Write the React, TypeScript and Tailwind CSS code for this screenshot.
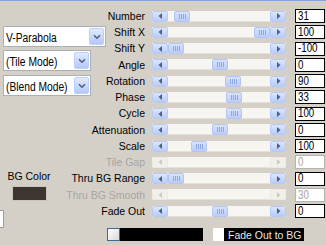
const rows = [
  { label: "Number", value: "31", pos: 6 },
  { label: "Shift X", value: "100", pos: 86 },
  { label: "Shift Y", value: "-100", pos: 0 },
  { label: "Angle", value: "0", pos: 44 },
  { label: "Rotation", value: "90", pos: 57 },
  { label: "Phase", value: "33", pos: 58 },
  { label: "Cycle", value: "100", pos: 58 },
  { label: "Attenuation", value: "0", pos: 44 },
  { label: "Scale", value: "100", pos: 23 },
  { label: "Tile Gap", value: "0", pos: -1, off: true },
  { label: "Thru BG Range", value: "0", pos: 0 },
  { label: "Thru BG Smooth", value: "30", pos: -1, off: true },
  { label: "Fade Out", value: "0", pos: 44 },
];

const ui = { fontFamily: '"Liberation Sans", Arial, sans-serif' };

function Arrow({ dir, off }: { dir: "l" | "r"; off?: boolean }) {
  return (
    <div
      className={`flex h-full w-[16px] shrink-0 items-center justify-center rounded-[2px] border ${
        off ? "border-[#ebe9e1] bg-[#f1f0ea]" : "border-[#b7caf5] bg-gradient-to-b from-[#dce6fd] to-[#b8ccf8]"
      }`}
    >
      <svg width="5" height="6" viewBox="0 0 5 6">
        {dir === "l" ? (
          <path d="M0.5 3 L4 0 L4 6 Z" fill={off ? "#cdcbc0" : "#4b5f8c"} />
        ) : (
          <path d="M4.5 3 L1 0 L1 6 Z" fill={off ? "#cdcbc0" : "#4b5f8c"} />
        )}
      </svg>
    </div>
  );
}

function Thumb({ pos }: { pos: number }) {
  return (
    <div
      className="flex h-full w-[16px] items-center justify-center gap-[1px] rounded-[2px] border border-[#b3c6f2] bg-gradient-to-b from-[#d6e2fd] to-[#bacdf9]"
      style={{ marginLeft: pos }}
    >
      <span className="h-[5px] w-[1px] bg-[#8ea8e6]" />
      <span className="h-[5px] w-[1px] bg-[#8ea8e6]" />
      <span className="h-[5px] w-[1px] bg-[#8ea8e6]" />
      <span className="h-[5px] w-[1px] bg-[#8ea8e6]" />
    </div>
  );
}

function Bar({ pos, off }: { pos: number; off?: boolean }) {
  return (
    <div className="ml-[7px] flex h-[11px] w-[134px] bg-[#f6f5f1] shadow-[inset_0_-1px_0_#e4e1d8]">
      <Arrow dir="l" off={off} />
      <div className="flex h-full flex-1">{pos >= 0 && <Thumb pos={pos} />}</div>
      <Arrow dir="r" off={off} />
    </div>
  );
}

function Select({ text, w }: { text: string; w: string }) {
  return (
    <div className={`flex h-[21px] items-center overflow-hidden border border-[#a9b0b8] bg-white ${w}`}>
      <div className="min-w-0 flex-1 overflow-hidden pl-[2px]">
        <span className="inline-block origin-left scale-x-[0.82] whitespace-nowrap text-[12.5px] leading-none text-black">
          {text}
        </span>
      </div>
      <div className="mr-[1px] flex h-[17px] w-[15px] shrink-0 items-center justify-center rounded-[2px] border border-[#bccff8] bg-gradient-to-b from-[#e2eafe] to-[#b4c8f6]">
        <svg width="8" height="6" viewBox="0 0 8 6">
          <path d="M1 1.2 L4 4.2 L7 1.2" stroke="#4d6185" strokeWidth="1.6" fill="none" />
        </svg>
      </div>
    </div>
  );
}

export default function App() {
  return (
    <div className="flex h-[245px] w-[326px] flex-col overflow-hidden bg-[#d4d0c8]" style={ui}>
      <div className="h-[1px] w-full bg-[#86a2de]" />
      <div className="flex pt-[7px]">
        <div className="flex w-[107px] shrink-0 flex-col pl-[3px]">
          <div className="mt-[18px]">
            <Select text="V-Parabola" w="w-[103px]" />
          </div>
          <div className="mt-[3px]">
            <Select text="(Tile Mode)" w="w-[88px]" />
          </div>
          <div className="mt-[4px]">
            <Select text="(Blend Mode)" w="w-[88px]" />
          </div>
          <div className="ml-[1px] mt-[73px] flex w-[50px] flex-col items-center">
            <span className="text-[10.5px] leading-[14px] text-black">BG Color</span>
            <div className="mt-[3px] h-[15px] w-[35px] border border-[#c9c5bd] bg-[#3c3530]" />
          </div>
          <div className="-ml-[3px] mt-[9px] h-[18px] w-[4px] border-y border-r border-[#a3a09a] bg-white" />
        </div>
        <div className="flex flex-col">
          {rows.map((r) => (
            <div key={r.label} className="flex h-[16.25px] items-center">
              <div className="flex w-[38px] justify-end">
                <span
                  className={`whitespace-nowrap text-[10.5px] leading-none ${
                    r.off ? "text-[#a7a5a0]" : "text-black"
                  }`}
                >
                  {r.label}
                </span>
              </div>
              <Bar pos={r.pos} off={r.off} />
              <div
                className={`ml-[9px] flex h-[14px] w-[30px] items-center overflow-hidden border bg-white pl-[2px] ${
                  r.off ? "border-[#b5b3ad] text-[#a7a5a0]" : "border-black text-black"
                }`}
              >
                <span className="inline-block origin-left scale-x-[0.78] whitespace-nowrap text-[12.5px] leading-none">
                  {r.value}
                </span>
              </div>
            </div>
          ))}
          <div className="mt-[9px] flex h-[13px] items-center">
            <div className="h-[13px] w-[13px] border border-[#3a6aa3] bg-gradient-to-br from-white to-[#d9d9d9]" />
            <div className="h-[13px] w-[83px] bg-black" />
            <div className="ml-[10px] h-[13px] w-[11px] bg-white" />
            <div className="flex h-[13px] w-[80px] items-center bg-black pl-[4px] text-[10.5px] leading-none text-[#e4e4e4]">
              Fade Out to BG
            </div>
          </div>
        </div>
      </div>
    </div>
  );
}
